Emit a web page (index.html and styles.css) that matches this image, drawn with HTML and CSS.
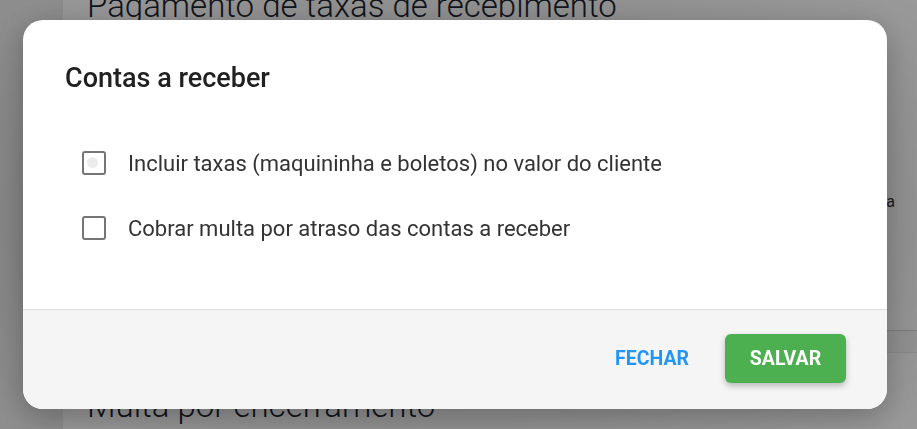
FILE: index.html
```html
<!DOCTYPE html>
<html>
<head>
    <title>Contas a receber</title>
    <meta charset="UTF-8">
    <link rel="stylesheet" href="styles.css">
</head>
<body>
<div class="page">
    <div class="card">
        <h1 class="section-title">Pagamento de taxas de recebimento</h1>
        <div class="hint-row">Cobrar do cliente o valor da taxa</div>
        <div class="field-band"></div>
        <h1 class="section-title">Multa por encerramento</h1>
    </div>
</div>
<div class="backdrop"></div>

<div class="dialog">
    <h2 class="dialog-title">Contas a receber</h2>
    <div class="dialog-body">
        <label class="check-row">
            <span class="checkbox"><span class="ripple"></span></span>
            Incluir taxas (maquininha e boletos) no valor do cliente
        </label>
        <label class="check-row">
            <span class="checkbox"></span>
            Cobrar multa por atraso das contas a receber
        </label>
    </div>
    <div class="dialog-footer">
        <button class="btn-text">FECHAR</button>
        <button class="btn-save">SALVAR</button>
    </div>
</div>
</body>
</html>
```

FILE: styles.css
```css
body {
    margin: 0;
    height: 429px;
    overflow: hidden;
    font-family: Roboto, "Liberation Sans", sans-serif;
    background-color: #ececec;
}
.page {
    padding-left: 63px;
    height: 100%;
}
.card {
    background-color: #ffffff;
    height: 100%;
    padding-left: 24px;
    overflow: hidden;
}
.section-title {
    margin: 0;
    font-size: 33px;
    line-height: 40px;
    font-weight: 300;
    color: #1c2430;
}
.card .section-title:first-child {
    margin-top: -14px;
}
.hint-row {
    margin-top: 166px;
    text-align: right;
    padding-right: 22px;
    font-size: 16px;
    line-height: 20px;
    color: #333;
}
.field-band {
    margin-top: 118px;
    height: 21px;
    border-top: 1px solid #d6d6d6;
    border-bottom: 1px solid #e8e8e8;
    background-color: #f7f7f7;
}
.card .section-title:last-child {
    margin-top: 33px;
}
.backdrop {
    position: fixed;
    inset: 0;
    background: radial-gradient(ellipse at center, rgba(0, 0, 0, 0.47), rgba(0, 0, 0, 0.45) 60%, rgba(0, 0, 0, 0.4));
}
.dialog {
    position: fixed;
    left: 23px;
    top: 20px;
    width: 864px;
    height: 389px;
    background-color: #ffffff;
    border-radius: 20px;
    overflow: hidden;
    display: flex;
    flex-direction: column;
    box-shadow: 0 8px 30px rgba(0, 0, 0, 0.25);
}
.dialog-title {
    margin: 0;
    padding: 44px 42px 0;
    font-size: 27px;
    line-height: 28px;
    font-weight: 500;
    color: #212121;
}
.dialog-body {
    flex: 1;
    padding: 51px 0 0 59px;
    display: flex;
    flex-direction: column;
    gap: 25px;
}
.check-row {
    display: flex;
    align-items: center;
    gap: 22px;
    height: 40px;
    font-size: 22px;
    color: #333333;
    cursor: pointer;
}
.checkbox {
    position: relative;
    width: 20px;
    height: 20px;
    border: 2px solid #757575;
    border-radius: 3px;
}
.ripple {
    position: absolute;
    left: 3px;
    top: 4px;
    width: 11px;
    height: 11px;
    border-radius: 50%;
    background-color: #ececec;
}
.dialog-footer {
    height: 99px;
    border-top: 1px solid #dcdcdc;
    background-color: #f5f5f5;
    display: flex;
    justify-content: flex-end;
    align-items: center;
    padding-right: 41px;
    gap: 20px;
}
.dialog-footer button {
    font-family: Roboto, "Liberation Sans", sans-serif;
    font-size: 19.5px;
    font-weight: 700;
    border: none;
    cursor: pointer;
    margin-top: -2px;
}
.btn-text {
    background: none;
    color: #2196f3;
    padding: 12px 16px;
}
.btn-save {
    width: 121px;
    height: 49px;
    background-color: #4caf50;
    color: #ffffff;
    border-radius: 6px;
    box-shadow: 0 3px 6px rgba(0, 0, 0, 0.25);
}
```
